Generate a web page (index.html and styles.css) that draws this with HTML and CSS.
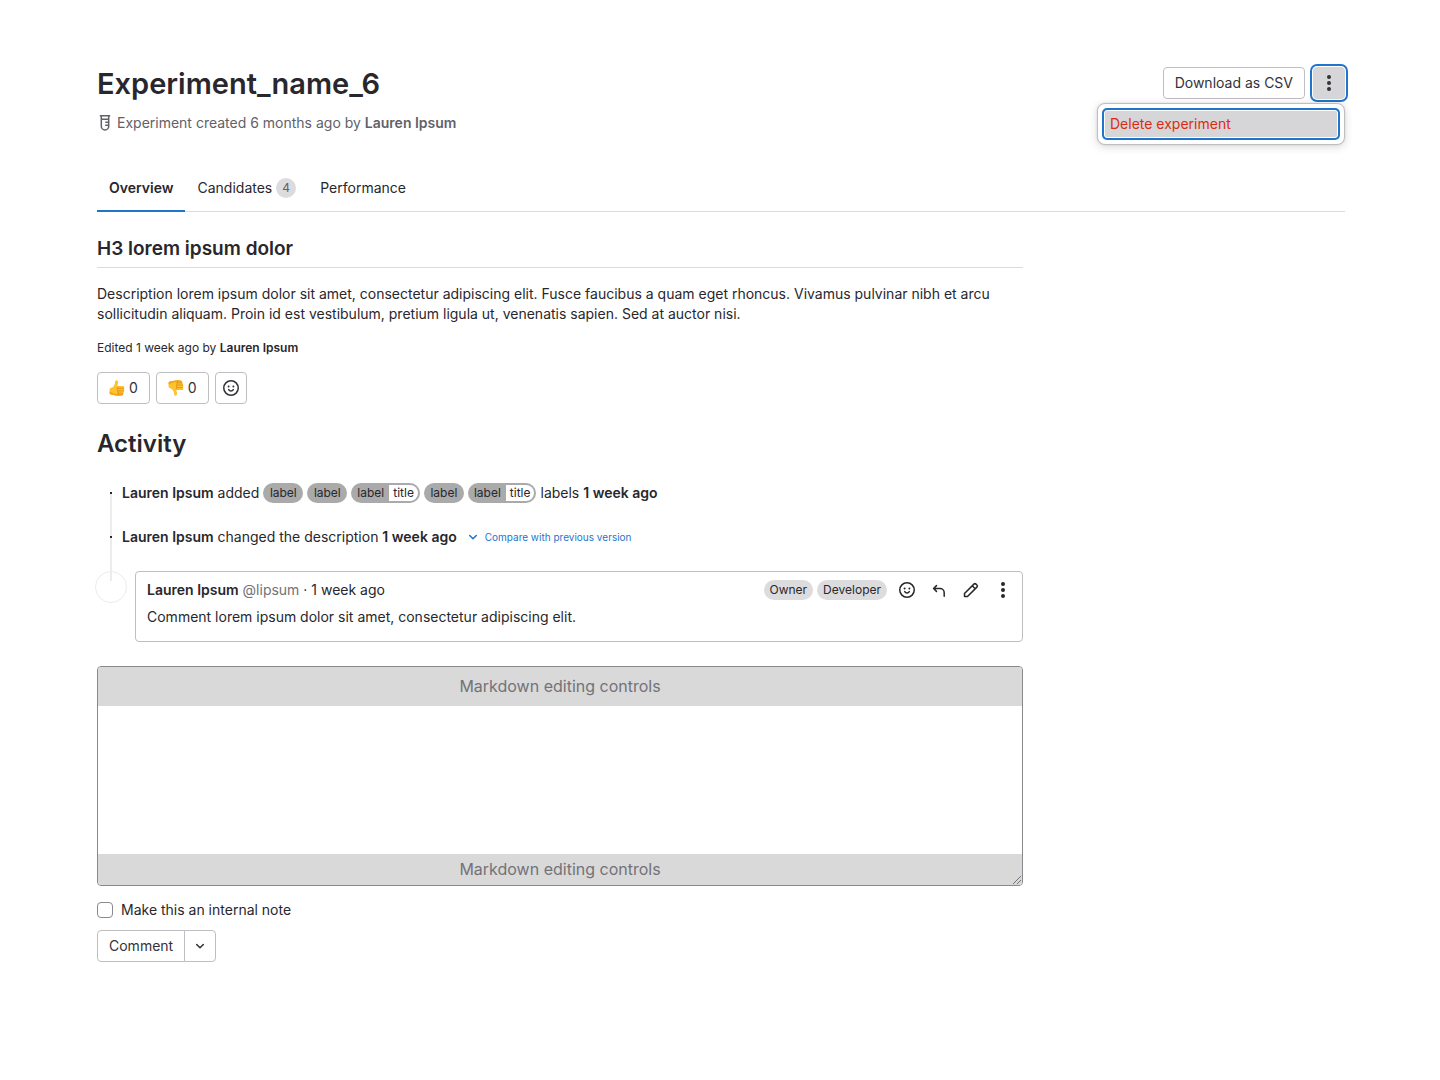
FILE: index.html
```html
<!DOCTYPE html>
<html lang="en">
<head>
<meta charset="utf-8">
<meta name="viewport" content="width=device-width, initial-scale=1">
<title>Experiment_name_6</title>
<link rel="stylesheet" href="styles.css">
</head>
<body>
<svg class="sprite" aria-hidden="true">
  <symbol id="i-tube" viewBox="0 0 16 16"><path d="M2.8 .8h10.4M4.3 1v10.2a3.7 3.7 0 0 0 7.4 0V1M4.3 4.3h7.4M8.3 7.2h3.2M8.3 10.2h3.2" fill="none" stroke="currentColor" stroke-width="1.5"/></symbol>
  <symbol id="i-dots" viewBox="0 0 16 16"><circle cx="8" cy="2" r="2"/><circle cx="8" cy="8" r="2"/><circle cx="8" cy="14" r="2"/></symbol>
  <symbol id="i-smile" viewBox="0 0 16 16"><circle cx="8" cy="8" r="7.25" fill="none" stroke="currentColor" stroke-width="1.5"/><circle cx="5.6" cy="6.6" r="1"/><circle cx="10.4" cy="6.6" r="1"/><path d="M5.7 9.6c.5.9 1.3 1.4 2.3 1.4s1.8-.5 2.3-1.4" fill="none" stroke="currentColor" stroke-width="1.5" stroke-linecap="round"/></symbol>
  <symbol id="i-reply" viewBox="0 0 16 16"><path d="M5.500 3.600 2.600 6.500 5.500 9.400M2.900 6.500H9a4.200 4.200 0 0 1 4.200 4.200v3.600" fill="none" stroke="currentColor" stroke-width="1.500" stroke-linecap="round" stroke-linejoin="round"/></symbol>
  <symbol id="i-pencil" viewBox="0 0 16 16"><path d="M1.500 14.500v-3L10.900 2.100a1.500 1.500 0 0 1 2.100 0l.9.9a1.500 1.500 0 0 1 0 2.100L4.500 14.500zM9.200 3.800l3 3" fill="none" stroke="currentColor" stroke-width="1.500" stroke-linejoin="round"/></symbol>
  <symbol id="i-chevron" viewBox="0 0 16 16"><path d="m4.700 6.500 3.300 3.300 3.300-3.300" fill="none" stroke="currentColor" stroke-width="1.500" stroke-linecap="round" stroke-linejoin="round"/></symbol>
  <symbol id="i-thumb" viewBox="0 0 16 16">
    <path d="M.6 9.200C.6 8.300 1.300 7.900 2.200 7.700 4.300 7.200 5.500 5.200 5.900 3.400L6.300 1.200C6.500.3 7.200 0 7.900.3c1.100.5 1.300 1.900 1 3.100L8.300 6h5.600c1.500 0 1.900 1.700.9 2.400.9.700.8 2-.1 2.500.6.8.300 1.900-.6 2.300.3 1.200-.4 2.200-1.800 2.400-2.600.5-5.300.3-7.500-.7L1.900 14.500C1 14.400.6 13.900.6 13z" fill="#fdc22e"/>
    <path d="M.6 11.500V13c0 .9.400 1.400 1.300 1.500l2.900.4c2.200 1 4.900 1.200 7.500.7 1.400-.2 2.100-1.200 1.800-2.400-2.600 1.800-7.300 1.700-13.500-1.700z" fill="#f2a31c"/>
    <path d="M9.300 8.400h5.300M9.200 10.900h5.300M9.300 13.200h4.600M9.100 6.500c-1.200.9-1 2.100 0 2.200-1 .7-.8 1.900.1 2.200-.8.700-.6 1.900.3 2.200-.6.700-.4 1.500.2 1.900" fill="none" stroke="#d98509" stroke-width=".7" stroke-linecap="round"/>
  </symbol>
</svg>

<div class="page">
  <header class="page-header">
    <div>
      <h1>Experiment_name_6</h1>
      <p class="meta"><svg class="icon"><use href="#i-tube"/></svg><span>Experiment created 6 months ago by <strong>Lauren Ipsum</strong></span></p>
    </div>
    <div class="actions">
      <button class="btn" type="button">Download as CSV</button>
      <div class="dropdown">
        <button class="btn btn-icon is-open" type="button" aria-label="More actions" aria-expanded="true"><svg class="icon"><use href="#i-dots"/></svg></button>
        <div class="menu"><button class="menu-item" type="button">Delete experiment</button></div>
      </div>
    </div>
  </header>

  <nav class="tabs">
    <a class="tab active" href="#overview">Overview</a>
    <a class="tab" href="#candidates">Candidates <span class="count">4</span></a>
    <a class="tab" href="#performance">Performance</a>
  </nav>

  <div class="layout">
    <main id="overview">
      <h3>H3 lorem ipsum dolor</h3>
      <p class="description">Description lorem ipsum dolor sit amet, consectetur adipiscing elit. Fusce faucibus a quam eget rhoncus. Vivamus pulvinar nibh et arcu sollicitudin aliquam. Proin id est vestibulum, pretium ligula ut, venenatis sapien. Sed at auctor nisi.</p>
      <p class="edited">Edited 1 week ago by <strong>Lauren Ipsum</strong></p>
      <div class="awards">
        <button class="btn award" type="button" aria-label="Thumbs up"><svg class="icon"><use href="#i-thumb"/></svg>0</button>
        <button class="btn award" type="button" aria-label="Thumbs down"><svg class="icon down"><use href="#i-thumb"/></svg>0</button>
        <button class="btn btn-icon" type="button" aria-label="Add reaction"><svg class="icon"><use href="#i-smile"/></svg></button>
      </div>

      <h2>Activity</h2>
      <ol class="timeline">
        <li class="note">
          <span class="dot"></span>
          <div class="note-text"><span><strong>Lauren Ipsum</strong> added</span>
            <span class="label">label</span><span class="label">label</span><span class="label scoped">label<span class="scope">title</span></span><span class="label">label</span><span class="label scoped">label<span class="scope">title</span></span>
            <span>labels <strong>1 week ago</strong></span></div>
        </li>
        <li class="note">
          <span class="dot"></span>
          <div class="note-text"><span><strong>Lauren Ipsum</strong> changed the description <strong>1 week ago</strong></span>
            <a class="compare" href="#compare"><svg class="icon"><use href="#i-chevron"/></svg>Compare with previous version</a></div>
        </li>
        <li class="comment">
          <span class="avatar"></span>
          <article class="comment-card">
            <div class="comment-header">
              <p><strong>Lauren Ipsum</strong> <span class="handle">@lipsum</span> · 1 week ago</p>
              <div class="comment-tools">
                <span class="badge">Owner</span><span class="badge">Developer</span>
                <div class="tool-buttons">
                  <button class="tool" type="button" aria-label="Add reaction"><svg class="icon"><use href="#i-smile"/></svg></button>
                  <button class="tool" type="button" aria-label="Reply"><svg class="icon"><use href="#i-reply"/></svg></button>
                  <button class="tool" type="button" aria-label="Edit comment"><svg class="icon"><use href="#i-pencil"/></svg></button>
                  <button class="tool" type="button" aria-label="More actions"><svg class="icon"><use href="#i-dots"/></svg></button>
                </div>
              </div>
            </div>
            <p>Comment lorem ipsum dolor sit amet, consectetur adipiscing elit.</p>
          </article>
        </li>
      </ol>

      <form>
        <div class="editor">
          <div class="editor-bar">Markdown editing controls</div>
          <textarea aria-label="Comment"></textarea>
          <div class="editor-bar editor-footer">Markdown editing controls</div>
          <svg class="grip" viewBox="0 0 10 10" aria-hidden="true"><path d="M1 9 9 1M5 9l4-4" fill="none" stroke="#737278" stroke-width="1"/></svg>
        </div>
        <label class="internal"><input type="checkbox">Make this an internal note</label>
        <div class="split">
          <button class="btn" type="button">Comment</button>
          <button class="btn btn-icon" type="button" aria-label="Comment options"><svg class="icon"><use href="#i-chevron"/></svg></button>
        </div>
      </form>
    </main>
  </div>
</div>
</body>
</html>
```
FILE: styles.css
```css
* { box-sizing: border-box; }

body {
  margin: 0;
  background: #fff;
  color: #28272d;
  font: 14px/20px Inter, "Noto Sans", sans-serif;
}

h1, h2, h3, p, ol { margin: 0; padding: 0; }
h1, h2, h3, strong { font-weight: 600; }
button, textarea { font: inherit; color: inherit; }
a { color: inherit; text-decoration: none; }

.sprite { display: none; }
.icon { width: 16px; height: 16px; flex: none; fill: currentColor; }

.page { padding: 64px 95px 64px 97px; }

.page-header { display: flex; justify-content: space-between; align-items: flex-start; }
h1 { font-size: 29px; line-height: 40px; }
.meta { display: flex; align-items: center; gap: 4px; margin-top: 9px; color: #626168; }

.btn {
  display: inline-flex;
  align-items: center;
  justify-content: center;
  height: 32px;
  padding: 0 11px;
  border: 1px solid #bfbfc3;
  border-radius: 4px;
  background: #fff;
  color: #333238;
}
.btn-icon { width: 32px; padding: 0; }

.actions { display: flex; gap: 8px; padding-top: 3px; }
.dropdown { position: relative; }
.is-open { border-color: #d6d6d8; background: #d6d6d8; box-shadow: 0 0 0 1px #fff, 0 0 0 3px #1f75cb; }
.menu {
  position: absolute;
  top: 36px;
  right: 0;
  width: 248px;
  padding: 6px;
  border: 1px solid #bfbfc3;
  border-radius: 8px;
  background: #fff;
  box-shadow: 0 2px 8px rgba(31, 30, 36, .16), 0 0 2px rgba(31, 30, 36, .16);
}
.menu-item {
  display: block;
  width: 100%;
  height: 28px;
  padding: 0 5px;
  border: 1px solid #fff;
  border-radius: 3px;
  background: #d6d6d8;
  box-shadow: 0 0 0 2px #1f75cb;
  color: #dd2b0e;
  text-align: left;
}

.tabs { display: flex; margin-top: 30px; border-bottom: 1px solid #dcdcde; }
.tab { display: flex; align-items: center; gap: 4px; height: 49px; margin-bottom: -1px; padding: 0 12px; }
.tab.active { box-shadow: inset 0 -2px #1f75cb; font-weight: 600; }
.count {
  min-width: 20px;
  border-radius: 10px;
  background: #dcdcde;
  color: #626168;
  font-size: 12px;
  text-align: center;
}

.layout { display: grid; grid-template-columns: minmax(0, 1fr) 290px; gap: 32px; padding-top: 23px; }

h3 { padding-bottom: 4px; border-bottom: 1px solid #dcdcde; font-size: 19px; line-height: 28px; }
.description { margin-top: 16px; }
.edited { margin-top: 14px; font-size: 12px; }
.awards { display: flex; gap: 6px; margin-top: 14px; }
.award { gap: 4px; }
.down { transform: scaleY(-1); }

h2 { margin-top: 24px; font-size: 24px; line-height: 32px; }

.timeline { position: relative; margin: 23px 0 24px -2px; list-style: none; }
.timeline::before {
  content: "";
  position: absolute;
  top: 10px;
  left: 15px;
  width: 2px;
  height: 88px;
  background: #ececef;
}
.note { display: flex; align-items: center; gap: 10px; margin-bottom: 24px; padding-left: 15px; }
.dot { position: relative; width: 2px; height: 2px; background: #28272d; }
.note-text { display: flex; align-items: center; gap: 4px; }
.label {
  display: inline-flex;
  justify-content: center;
  min-width: 40px;
  height: 20px;
  padding: 0 6px;
  border-radius: 10px;
  background: #aaa;
  font-size: 12px;
}
.scoped { padding-right: 2px; }
.scope {
  height: 16px;
  margin: 2px 0 2px 5px;
  padding: 0 4px;
  border-radius: 0 8px 8px 0;
  background: #fff;
  line-height: 16px;
}
.compare { display: flex; align-items: center; gap: 4px; margin-left: 4px; color: #1f75cb; font-size: 10px; }

.comment { display: flex; gap: 8px; }
.avatar { position: relative; flex: none; width: 32px; height: 32px; border: 1px solid #ececef; border-radius: 50%; }
.comment-card { flex: 1; padding: 2px 3px 14px 11px; border: 1px solid #bfbfc3; border-radius: 4px; }
.comment-header { display: flex; align-items: center; justify-content: space-between; margin-bottom: 1px; }
.handle { color: #737278; }
.comment-tools { display: flex; align-items: center; gap: 4px; }
.tool-buttons { display: flex; }
.badge { padding: 0 6px; border-radius: 10px; background: #dcdcde; font-size: 12px; }
.tool { display: flex; align-items: center; justify-content: center; width: 32px; height: 32px; padding: 0; border: 0; background: none; }

.editor { position: relative; overflow: hidden; border: 1px solid #89888d; border-radius: 4px; }
.editor-bar { background: #d9d9d9; color: #737278; font-size: 16px; line-height: 39px; text-align: center; }
.editor-footer { line-height: 31px; }
.editor textarea { display: block; width: 100%; height: 148px; padding: 12px; border: 0; outline: 0; resize: none; }
.grip { position: absolute; right: 0; bottom: 0; width: 10px; height: 10px; }

.internal { display: flex; align-items: center; gap: 8px; margin: 14px 0 10px; }
.internal input { appearance: none; width: 16px; height: 16px; margin: 0; border: 1px solid #89888d; border-radius: 4px; }
.split { display: flex; }
.split .btn:first-child { border-radius: 4px 0 0 4px; }
.split .btn:last-child { margin-left: -1px; border-radius: 0 4px 4px 0; }
```
